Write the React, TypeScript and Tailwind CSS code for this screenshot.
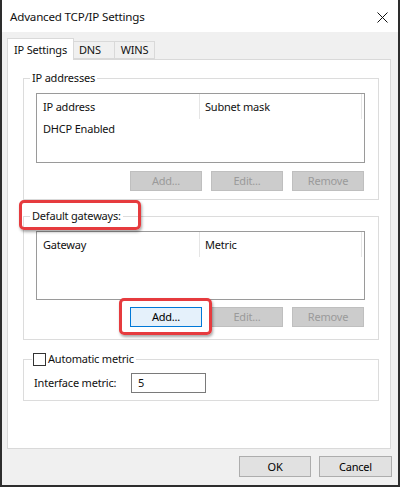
import React from "react";

function Btn({ label, disabled, focus, w = "w-[72px]", h = "h-[20px]" }: { label: string; disabled?: boolean; focus?: boolean; w?: string; h?: string }) {
  const cls = disabled
    ? "bg-[#cccccc] border-[#bfbfbf] text-[#9a9a9a]"
    : focus
    ? "bg-[#e5f1fb] border-[#0078d7] text-black"
    : "bg-[#e1e1e1] border-[#adadad] text-black";
  return (
    <div className={`${w} ${h} border flex items-center justify-center ${cls}`}>{label}</div>
  );
}

function ListView({ c1, c2, row, h }: { c1: string; c2: string; row?: string; h: string }) {
  return (
    <div className={`${h} w-full border border-[#9a9a9a] bg-white flex flex-col`}>
      <div className="flex h-[25px] shrink-0">
        <div className="w-[163px] h-full border-r border-[#e5e5e5] pl-[6px] flex items-center">{c1}</div>
        <div className="w-[162px] h-full border-r border-[#e5e5e5] pl-[5px] flex items-center">{c2}</div>
      </div>
      {row && <div className="pl-[6px] h-[20px] flex items-center">{row}</div>}
    </div>
  );
}

export default function App() {
  return (
    <div className="relative w-[400px] h-[487px] bg-[#f0f0f0] border-x-2 border-b-2 border-[#2d2d2d] font-['Noto_Sans',sans-serif] text-[11px] tracking-[-0.2px] leading-[16px] text-[#111111] flex flex-col">
      {/* Title bar */}
      <div className="h-[32px] shrink-0 bg-white flex items-center justify-between pl-[8px] pr-[10px] pt-[2px]">
        <span className="text-[11.6px]">Advanced TCP/IP Settings</span>
        <svg width="11" height="11" viewBox="0 0 11 11">
          <path d="M0.5 0.5 L10.5 10.5 M10.5 0.5 L0.5 10.5" stroke="#111" strokeWidth="1" fill="none" />
        </svg>
      </div>

      {/* Tabs */}
      <div className="flex items-end pl-[5px] pt-[6px]">
        <div className="relative z-10 w-[67px] h-[22px] mb-[-1px] bg-white border border-b-0 border-[#d9d9d9] flex items-center justify-center">IP Settings</div>
        <div className="w-[41px] h-[18px] border border-l-0 border-[#d9d9d9] flex items-center pl-[5px]">DNS</div>
        <div className="w-[40px] h-[18px] border border-l-0 border-[#d9d9d9] flex items-center justify-center">WINS</div>
      </div>

      {/* Panel */}
      <div className="ml-[5px] w-[384px] h-[390px] shrink-0 border border-[#d9d9d9] bg-white flex flex-col">
        {/* IP addresses */}
        <div className="relative ml-[15px] mt-[18px] w-[356px] h-[122px] border border-[#dcdcdc] pt-[14px] pl-[12px] pr-[13px] flex flex-col">
          <div className="absolute left-[6px] top-[-9px] px-[2px] bg-white">IP addresses</div>
          <ListView h="h-[70px]" c1="IP address" c2="Subnet mask" row="DHCP Enabled" />
          <div className="mt-[8px] flex justify-end gap-[9px] pr-[1px]">
            <Btn label="Add..." disabled />
            <Btn label="Edit..." disabled />
            <Btn label="Remove" disabled />
          </div>
        </div>

        {/* Default gateways */}
        <div className="relative ml-[15px] mt-[16px] w-[356px] h-[124px] border border-[#dcdcdc] pt-[14px] pl-[12px] pr-[13px] flex flex-col">
          <div className="absolute left-[6px] top-[-9px] px-[2px] bg-white">Default gateways:</div>
          <ListView h="h-[69px]" c1="Gateway" c2="Metric" />
          <div className="mt-[7px] flex justify-end gap-[9px] pr-[1px]">
            <Btn label="Add..." focus />
            <Btn label="Edit..." disabled />
            <Btn label="Remove" disabled />
          </div>
        </div>

        {/* Metric */}
        <div className="relative ml-[15px] mt-[19px] w-[356px] h-[42px] border border-[#dcdcdc] pt-[13px] pl-[10px]">
          <div className="absolute left-[8px] top-[-9px] pl-[1px] pr-[2px] bg-white flex items-center gap-[2px]">
            <div className="w-[13px] h-[13px] border border-[#333333] bg-white" />
            <span>Automatic metric</span>
          </div>
          <div className="flex items-center">
            <div className="w-[97px]">Interface metric:</div>
            <div className="w-[75px] h-[20px] border border-[#7a7a7a] bg-white pl-[6px] flex items-center">5</div>
          </div>
        </div>
      </div>

      {/* Bottom buttons */}
      <div className="mt-[7px] flex justify-end gap-[8px] pr-[6px]">
        <Btn label="OK" h="h-[21px]" />
        <Btn label="Cancel" h="h-[21px]" w="w-[73px]" />
      </div>

      {/* Red highlight boxes */}
      <div className="absolute left-[17px] top-[200px] w-[122px] h-[30px] border-[3px] border-[#e63b3e] rounded-[5px] shadow-[1px_2px_3px_rgba(0,0,0,0.35)]" />
      <div className="absolute left-[117px] top-[298px] w-[93px] h-[37px] border-[3px] border-[#e63b3e] rounded-[5px] shadow-[1px_2px_3px_rgba(0,0,0,0.35)]" />
    </div>
  );
}
